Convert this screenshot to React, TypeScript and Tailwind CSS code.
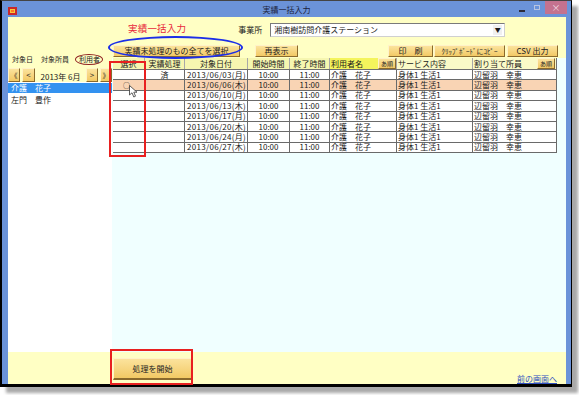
import React from 'react'

const rows = [
  { date: '2013/06/03(月)', done: true },
  { date: '2013/06/06(木)', hl: true, mark: true },
  { date: '2013/06/10(月)' },
  { date: '2013/06/13(木)' },
  { date: '2013/06/17(月)' },
  { date: '2013/06/20(木)' },
  { date: '2013/06/24(月)' },
  { date: '2013/06/27(木)' },
]

const btn =
  'flex items-center justify-center bg-gradient-to-b from-[#fbe39c] to-[#f2c964] border border-[#fff2c8] border-r-[#8a6a2c] border-b-[#8a6a2c] text-[#222] leading-none'

function SortBtn() {
  return (
    <div className={`${btn} w-[18px] h-[11px] text-[6px] ml-auto`}>あ順</div>
  )
}

export default function App() {
  return (
    <div className="relative w-[579px] h-[395px] bg-white overflow-hidden font-['Noto_Sans_CJK_JP',sans-serif] text-[#1a1a1a]">
      <div className="flex flex-col w-[572px] h-[387px] border-black border-t border-t-[#444] border-l-2 border-r border-b-[3px] shadow-[6px_6px_3px_#a9a9a9]">
        {/* title bar */}
        <div className="grid grid-cols-[1fr_auto_1fr] items-center h-[16px] bg-[#6b93d9]">
          <div className="flex items-center pl-[6px] pt-[4px]">
            <svg width="9" height="8" viewBox="0 0 9 8">
              <rect width="9" height="8" fill="#c8282a" />
              <rect x="2" y="2" width="5" height="4" fill="#f6c83c" />
              <rect x="3" y="3" width="3" height="2" fill="#ff7a1e" />
            </svg>
          </div>
          <div className="text-[8px] leading-none text-[#1c1f3c] pt-[1px]">実績一括入力</div>
          <div className="flex items-start justify-end h-full pr-[4px]">
            <div className="w-[6px] h-[2px] bg-[#2c2c3c] mt-[9px] mr-[9px]" />
            <div className="w-[6px] h-[5px] border border-[#b8c4e0] mt-[4px] mr-[5px]" />
            <div className="flex items-center justify-center w-[22px] h-[13px] bg-[#c4728f] text-[9px] leading-none text-[#f2dde4]">×</div>
          </div>
        </div>

        <div className="flex flex-1">
          <div className="w-[6px] bg-[#6b93d9]" />
          <div className="flex flex-col w-[558px] bg-[#ffffc4]">
            {/* row A */}
            <div className="flex items-center h-[23px]">
              <div className="ml-[120px] text-[9.5px] leading-none text-[#e8283c] tracking-[0.2px]">実績一括入力</div>
              <div className="ml-[52px] text-[8px] leading-none pt-[2px]">事業所</div>
              <div className="ml-[8px] mt-[2px] flex items-center w-[235px] h-[14px] bg-white border border-[#7a7a7a] border-r-[#d0d0d0] border-b-[#d0d0d0]">
                <span className="pl-[3px] text-[8px] leading-none">湘南樹訪問介護ステーション</span>
                <span className="ml-auto mr-[2px] flex items-center justify-center w-[9px] h-[10px] bg-[#f0f0f0] text-[6px] leading-none">▼</span>
              </div>
            </div>

            {/* row B */}
            <div className="flex flex-1">
              {/* left column */}
              <div className="flex flex-col w-[104px]">
                <div className="flex items-center h-[11px] mt-[14px] text-[7px] leading-none">
                  <span className="ml-[4px]">対象日</span>
                  <span className="ml-[8px]">対象所員</span>
                  <span className="ml-[10px]">利用者</span>
                </div>
                <div className="flex items-center h-[14px] mt-[3px] text-[8px] leading-none">
                  <div className={`${btn} w-[12px] h-[14px] text-[7px]`}>《</div>
                  <div className={`${btn} w-[13px] h-[14px] ml-[2px]`}>&lt;</div>
                  <div className="flex items-center justify-center w-[51px] h-[14px] pt-[3px]">2013年 6月</div>
                  <div className={`${btn} w-[12px] h-[14px]`}>&gt;</div>
                  <div className={`${btn} w-[12px] h-[14px] ml-[2px] text-[7px]`}>》</div>
                </div>
                <div className="flex-1 bg-white pt-[1px] text-[8px] leading-none">
                  <div className="flex items-center h-[10px] bg-[#3392f0] text-white pl-[3px]">介護　花子</div>
                  <div className="flex items-center h-[10px] pl-[3px] mt-[2px]">左門　豊作</div>
                </div>
              </div>

              {/* right column */}
              <div className="flex flex-col flex-1">
                <div className="flex items-start h-[18px] pt-[5px] text-[8px]">
                  <div className={`${btn} ml-[1px] w-[127px] h-[12px]`}>実績未処理のもの全てを選択</div>
                  <div className={`${btn} ml-[15px] w-[43px] h-[12px]`}>再表示</div>
                  <div className={`${btn} ml-auto w-[45px] h-[12px]`}>印　刷</div>
                  <div className={`${btn} ml-[1px] w-[71px] h-[12px] text-[7px]`}>ｸﾘｯﾌﾟﾎﾞｰﾄﾞにｺﾋﾟｰ</div>
                  <div className={`${btn} ml-[2px] mr-[8px] w-[51px] h-[12px]`}>CSV 出力</div>
                </div>
                <div className="flex-1 bg-[#f0ffff]">
                  <div className="ml-[1px] w-[444px] text-[8px] leading-none">
                    <div className="flex h-[12px] border-b border-[#707070]">
                      <div className="flex items-center justify-center w-[32px] bg-[#f6f6b0] border-r border-[#a8a8a8]">選択</div>
                      <div className="flex items-center justify-center w-[40px] bg-[#f6f6b0] border-r border-[#a8a8a8]">実績処理</div>
                      <div className="flex items-center justify-center w-[63px] bg-[#f6f6b0] border-r border-[#a8a8a8]">対象日付</div>
                      <div className="flex items-center justify-center w-[42px] bg-[#f6f6b0] border-r border-[#a8a8a8]">開始時間</div>
                      <div className="flex items-center justify-center w-[40px] bg-[#f6f6b0] border-r border-[#a8a8a8]">終了時間</div>
                      <div className="flex items-center w-[67px] bg-[#f4f45c] border-r border-[#a8a8a8] pl-[1px]">
                        利用者名
                        <SortBtn />
                      </div>
                      <div className="flex items-center w-[76px] bg-[#fafac8] border-r border-[#a8a8a8] pl-[1px]">サービス内容</div>
                      <div className="flex items-center w-[84px] bg-[#fafac8] border-r border-[#707070] pl-[1px] pr-[1px]">
                        割り当て所員
                        <SortBtn />
                      </div>
                    </div>
                    {rows.map((r) => (
                      <div
                        key={r.date}
                        className={`flex h-[10.4px] border-b border-[#6a6a6a] ${r.hl ? 'bg-[#f9d4b4]' : 'bg-white'}`}
                      >
                        <div className="flex items-center w-[32px] border-r border-[#8a8a8a] pl-[10px] text-[7px]">{r.mark ? '○' : ''}</div>
                        <div className="flex items-center justify-center w-[40px] border-r border-[#6a6a6a]">{r.done ? '済' : ''}</div>
                        <div className="flex items-center w-[63px] border-r border-[#6a6a6a] pl-[2px] tracking-[0.3px]">{r.date}</div>
                        <div className="flex items-center justify-center w-[42px] border-r border-[#6a6a6a]">10:00</div>
                        <div className="flex items-center justify-center w-[40px] border-r border-[#6a6a6a]">11:00</div>
                        <div className="flex items-center w-[67px] border-r border-[#6a6a6a] pl-[1px]">介護　花子</div>
                        <div className="flex items-center w-[76px] border-r border-[#6a6a6a] pl-[1px]">身体1 生活1</div>
                        <div className="flex items-center w-[84px] border-r border-[#6a6a6a] pl-[1px]">辺留羽　幸恵</div>
                      </div>
                    ))}
                  </div>
                </div>
              </div>
            </div>

            {/* bottom bar */}
            <div className="flex h-[32px]">
              <div className={`${btn} mt-[6px] ml-[105px] w-[80px] h-[22px] text-[8px] border-r-2 border-b-2`}>処理を開始</div>
              <a className="ml-auto mr-[9px] self-end mb-[1px] text-[8px] leading-none text-[#3050c0] underline">前の画面へ</a>
            </div>
          </div>
          <div className="w-[5px] bg-[#6b93d9]" />
        </div>
      </div>

      {/* annotations */}
      <div className="absolute left-[108px] top-[36px] w-[135px] h-[23px] rounded-[50%] border-2 border-[#1c2ee8]" />
      <div className="absolute left-[75px] top-[54px] w-[28px] h-[11px] rounded-[50%] border border-[#902020]" />
      <div className="absolute left-[109px] top-[61px] w-[37px] h-[96px] border-2 border-[#e82020]" />
      <div className="absolute left-[110px] top-[349px] w-[83px] h-[36px] border-2 border-[#e82020]" />
      <svg className="absolute left-[129px] top-[85px]" width="9" height="13" viewBox="0 0 9 13">
        <path d="M0.5 0.5 L0.5 10 L3 7.8 L4.8 12 L6.5 11.2 L4.8 7.2 L8 7.2 Z" fill="white" stroke="#333" strokeWidth="0.8" />
      </svg>
    </div>
  )
}
